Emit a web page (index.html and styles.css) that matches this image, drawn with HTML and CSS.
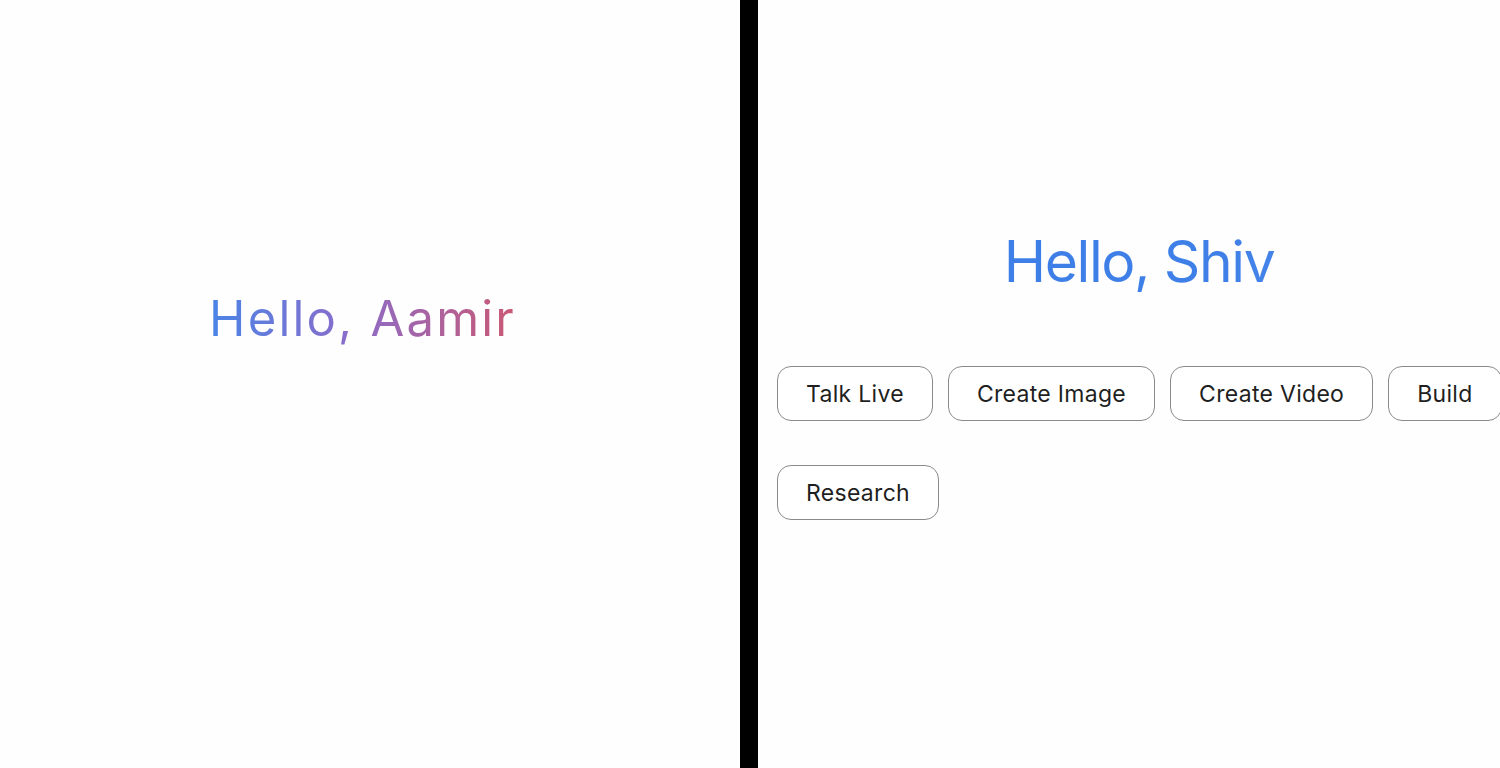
FILE: index.html
```html
<!DOCTYPE html>
<html lang="en">
<head>
    <meta charset="UTF-8">
    <meta name="viewport" content="width=device-width, initial-scale=1.0">
    <title>Gemini Greeting</title>
    <link rel="stylesheet" href="styles.css">
</head>
<body>
    <div class="screens">
        <div class="panel panel-left">
            <h1 class="greeting greeting-old">Hello, Aamir</h1>
        </div>

        <div class="divider"></div>

        <div class="panel panel-right">
            <h1 class="greeting greeting-new">Hello, Shiv</h1>
            <div class="chips">
                <button class="chip">Talk Live</button>
                <button class="chip">Create Image</button>
                <button class="chip">Create Video</button>
                <button class="chip">Build</button>
                <button class="chip">Research</button>
            </div>
        </div>
    </div>
</body>
</html>
```

FILE: styles.css
```css
body {
    margin: 0;
    padding: 0;
    background: #fff;
    font-family: Inter, Arial, sans-serif;
    overflow: hidden;
}
.screens {
    display: flex;
    height: 768px;
}
.panel {
    background: #fefefe;
}
.panel-left {
    width: 740px;
    flex-shrink: 0;
    display: flex;
    justify-content: center;
    padding-top: 290px;
    box-sizing: border-box;
}
.divider {
    width: 18px;
    flex-shrink: 0;
    background: #000;
}
.panel-right {
    width: 762px;
    flex-shrink: 0;
    padding: 228px 0 0 19px;
    box-sizing: border-box;
}
.greeting {
    margin: 0;
    font-weight: 400;
    line-height: 1.2;
    background-clip: text;
    -webkit-background-clip: text;
    color: transparent;
}
.greeting-old {
    font-size: 49px;
    letter-spacing: 2.2px;
    padding-right: 15px;
    background-image: linear-gradient(90deg, #4a84e6 0%, #8c6cc9 45%, #d0566c 100%);
}
.greeting-new {
    font-size: 57px;
    letter-spacing: -1.4px;
    text-align: center;
    padding-right: 19px;
    background-image: linear-gradient(90deg, #3d7ee6 0%, #3f80e8 60%, #5b93ee 100%);
}
.chips {
    display: flex;
    flex-wrap: wrap;
    column-gap: 15px;
    row-gap: 44px;
    margin-top: 70px;
    width: 740px;
}
.chip {
    height: 55px;
    padding: 0 28px;
    border: 1.5px solid #8a8a8a;
    border-radius: 14px;
    background: #fff;
    color: #1f1f1f;
    font-family: Inter, Arial, sans-serif;
    font-size: 23px;
    letter-spacing: 0.3px;
}
```
